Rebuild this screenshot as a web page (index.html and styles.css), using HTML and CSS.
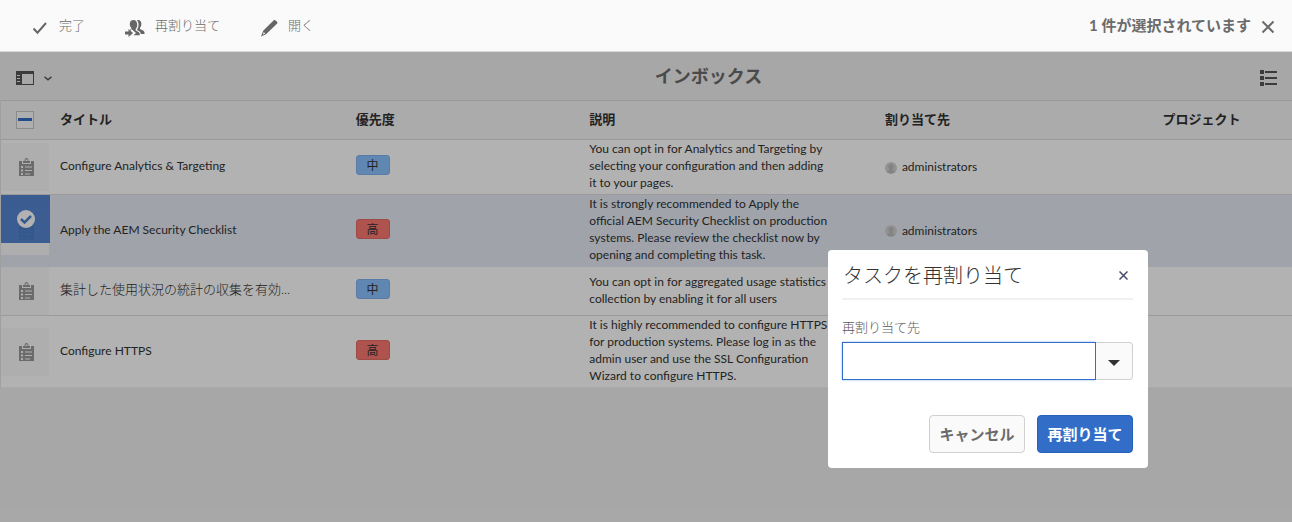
FILE: index.html
```html
<!DOCTYPE html>
<html lang="ja">
<head>
<meta charset="utf-8">
<title>インボックス</title>
<link rel="stylesheet" href="styles.css">
</head>
<body>
<svg class="sprite" aria-hidden="true">
  <symbol id="clipboard" viewBox="0 0 15 18">
    <path fill="currentColor" fill-rule="evenodd" d="M0 3h3v3h9V3h3v15H0zM2 8v2h2V8zm4 .5v1h7v-1zM2 11.500v2h2v-2zm4 .5v1h7v-1zM2 15v2h2v-2zm4 .5v1h5v-1z"/>
    <path fill="currentColor" fill-rule="evenodd" d="M4 5V3h1.500C5.500 1 6.200 0 7.500 0s2 1 2 3H11v2zM6.500 3h2V1.500h-2z"/>
  </symbol>
  <symbol id="avatar" viewBox="0 0 12 12">
    <circle cx="6" cy="6" r="6" fill="#d2d2d2"/>
    <path fill="#bcbcbc" d="M6 2c1.600 0 2.500 1.100 2.500 2.700 0 1-.4 1.900-1 2.400v.8L10 9.500C9 10.700 7.600 11.500 6 11.500S3 10.700 2 9.500l2.500-1.600v-.8c-.6-.5-1-1.400-1-2.400C3.500 3.100 4.400 2 6 2z"/>
  </symbol>
</svg>

<header class="actionbar">
  <div class="actions">
    <button class="action" type="button">
      <svg class="icon" viewBox="0 0 18 18"><path d="M2.500 9.500l4 4.200L15 4" fill="none" stroke="currentColor" stroke-width="2"/></svg>
      <span>完了</span>
    </button>
    <button class="action" type="button">
      <svg class="icon icon-wide" viewBox="0 0 20 18"><path fill="currentColor" d="M8.500 1c-2.300 0-3.700 1.600-3.700 4 0 1.700.6 3 1.500 4v1L3.500 11.500H6V9.800l5 4.200-2.500 2.200h6.300c0-1.800-.4-2.700-1.300-3.200l-2.800-1.500v-1.400c.9-1 1.500-2.400 1.500-4.400C12.200 2.800 10.800 1 8.500 1z"/><path fill="currentColor" d="M12 1.200C14.600.6 16.400 2.200 16.400 4.800c0 1.700-.5 3-1.400 4v1.300l3 1.500c1.200.6 1.600 1.500 1.600 3.400h-3.800c-.2-1.600-.9-2.400-2-3l-1.900-1c1-1.400 1.600-3 1.600-5.200 0-2-.5-3.500-1.500-4.600zM0 12.500h3.500V10l4.500 4-4.500 4v-2.500H0z"/></svg>
      <span>再割り当て</span>
    </button>
    <button class="action" type="button">
      <svg class="icon" viewBox="0 0 18 18"><path fill="currentColor" fill-rule="evenodd" d="M12.500 2.400l1.300-1.200c.5-.4 1-.4 1.500 0l1.900 1.900c.4.500.4 1 0 1.500L6 15.300 1 17.500l2.200-5.800zM3.800 13l-1 2.700 2.300-1.100z"/></svg>
      <span>開く</span>
    </button>
  </div>
  <div class="selection">
    <strong>1 件が選択されています</strong>
    <button class="deselect" type="button" aria-label="選択を解除"><svg viewBox="0 0 14 14"><path d="M1.500 1.500l11 11M12.500 1.500l-11 11" stroke="currentColor" stroke-width="2"/></svg></button>
  </div>
</header>

<main class="content">
  <div class="titlebar">
    <button class="rail" type="button" aria-label="サイドパネル">
      <svg class="rail-icon" viewBox="0 0 18 14"><path fill="currentColor" fill-rule="evenodd" d="M0 0h18v14H0zM6 3v10h11V3zM1 4v1h3V4zm0 3v1h3V7zm0 3v1h3v-1z"/></svg>
      <svg class="chevron" viewBox="0 0 8 5"><path d="M.5.700L4 3.700 7.500.700" fill="none" stroke="currentColor" stroke-width="1.500"/></svg>
    </button>
    <h1>インボックス</h1>
    <button class="viewswitch" type="button" aria-label="リスト表示">
      <svg viewBox="0 0 17 17"><path fill="currentColor" d="M0 0h4v4H0zM0 6h4v4H0zM0 12h4v4H0zM5 1h12v2H5zM5 7h12v2H5zM5 13h12v2H5z"/></svg>
    </button>
  </div>

  <table class="inbox">
    <colgroup><col class="c-thumb"><col class="c-title"><col class="c-priority"><col class="c-desc"><col class="c-assignee"><col></colgroup>
    <thead>
      <tr>
        <th class="check"><input class="select-all" type="checkbox" aria-label="すべて選択"></th>
        <th>タイトル</th><th>優先度</th><th>説明</th><th>割り当て先</th><th>プロジェクト</th>
      </tr>
    </thead>
    <tbody>
      <tr>
        <td class="thumb"><div class="tile"><svg><use href="#clipboard"/></svg></div></td>
        <td>Configure Analytics &amp; Targeting</td>
        <td><span class="badge medium">中</span></td>
        <td class="desc">You can opt in for Analytics and Targeting by selecting your configuration and then adding it to your pages.</td>
        <td><span class="assignee"><svg><use href="#avatar"/></svg>administrators</span></td>
        <td></td>
      </tr>
      <tr class="selected">
        <td class="thumb"><div class="tile"><svg><use href="#clipboard"/></svg></div>
          <div class="mark"><svg viewBox="0 0 18 18"><circle cx="9" cy="9" r="9" fill="#fff"/><path d="M4 9l3.500 3.500L14 6" fill="none" stroke="#4f82cf" stroke-width="2.500"/></svg></div></td>
        <td>Apply the AEM Security Checklist</td>
        <td><span class="badge high">高</span></td>
        <td class="desc">It is strongly recommended to Apply the official AEM Security Checklist on production systems. Please review the checklist now by opening and completing this task.</td>
        <td><span class="assignee"><svg><use href="#avatar"/></svg>administrators</span></td>
        <td></td>
      </tr>
      <tr>
        <td class="thumb"><div class="tile"><svg><use href="#clipboard"/></svg></div></td>
        <td class="ja">集計した使用状況の統計の収集を有効...</td>
        <td><span class="badge medium">中</span></td>
        <td class="desc">You can opt in for aggregated usage statistics collection by enabling it for all users</td>
        <td></td>
        <td></td>
      </tr>
      <tr>
        <td class="thumb"><div class="tile"><svg><use href="#clipboard"/></svg></div></td>
        <td>Configure HTTPS</td>
        <td><span class="badge high">高</span></td>
        <td class="desc">It is highly recommended to configure HTTPS for production systems. Please log in as the admin user and use the SSL Configuration Wizard to configure HTTPS.</td>
        <td></td>
        <td></td>
      </tr>
    </tbody>
  </table>
  <div class="shade"></div>
</main>

<form class="dialog" role="dialog" aria-labelledby="dialog-title">
  <div class="dialog-head">
    <h2 id="dialog-title">タスクを再割り当て</h2>
    <button class="close" type="button" aria-label="閉じる"><svg viewBox="0 0 9 9"><path d="M.5.500l8 8M8.500.500l-8 8" stroke="currentColor" stroke-width="1.500"/></svg></button>
  </div>
  <label for="assignee">再割り当て先</label>
  <div class="combo">
    <input id="assignee" type="text">
    <button type="button" aria-label="候補を表示"><svg viewBox="0 0 12 6"><path fill="currentColor" d="M0 0h12L6 6z"/></svg></button>
  </div>
  <div class="dialog-foot">
    <button class="btn" type="button">キャンセル</button>
    <button class="btn primary" type="submit">再割り当て</button>
  </div>
</form>
</body>
</html>
```

FILE: styles.css
```css
* { box-sizing: border-box; }

body {
  margin: 0;
  min-height: 100vh;
  display: flex;
  flex-direction: column;
  background: #f0f0f0;
  color: #323232;
  font-family: Lato, "Noto Sans CJK JP", sans-serif;
  font-size: 12px;
  line-height: 17px;
}

button, input { font: inherit; color: inherit; }
button { margin: 0; padding: 0; border: 0; background: none; }
svg { display: block; }
.sprite { position: absolute; width: 0; height: 0; }

.actionbar {
  display: flex;
  justify-content: space-between;
  align-items: center;
  height: 52px;
  padding: 0 17px 0 31px;
  background: #fafafa;
  border-bottom: 1px solid #d9d9d9;
  color: #6b6b6b;
}
.actions { display: flex; gap: 40px; }
.action { display: flex; align-items: center; gap: 10px; font-size: 13px; font-weight: 300; }
.icon { width: 18px; height: 18px; margin-top: 4px; color: #666; }
.icon-wide { width: 20px; }
.selection { display: flex; align-items: center; gap: 10px; font-size: 15px; }
.deselect svg { width: 14px; height: 14px; margin-top: 2px; }

.content { position: relative; flex: 1; }
.shade { position: absolute; inset: 0; background: rgba(0, 0, 0, .3); }

.titlebar {
  display: grid;
  grid-template-columns: 1fr auto 1fr;
  align-items: center;
  height: 48px;
  padding: 0 15px 0 16px;
  color: #555;
}
.titlebar h1 { margin: 0; padding-left: 124px; font-size: 18px; line-height: 24px; color: #6b6b6b; }
.rail { display: flex; align-items: center; gap: 10px; justify-self: start; margin-top: 4px; }
.rail-icon { width: 18px; height: 14px; }
.chevron { width: 8px; height: 5px; }
.viewswitch { justify-self: end; margin-top: 4px; }
.viewswitch svg { width: 17px; height: 17px; }

.inbox {
  width: 100%;
  table-layout: fixed;
  border-collapse: separate;
  border-spacing: 0;
  border-left: 1px solid #e4e4e4;
}
.c-thumb { width: 48px; }
.c-title { width: 22.9%; }
.c-priority { width: 18.1%; }
.c-desc { width: 22.9%; }
.c-assignee { width: 21.5%; }
.inbox th {
  height: 40px;
  padding: 0 0 1px 11px;
  border-top: 1px solid #dcdcdc;
  border-bottom: 1px solid #dcdcdc;
  background: #f5f5f5;
  font-size: 13px;
  text-align: left;
}
.inbox th.check { padding-left: 15px; }
.select-all {
  appearance: none;
  display: block;
  width: 18px;
  height: 18px;
  margin: 0;
  border: 1px solid #c8c8c8;
  background: linear-gradient(#326ec8, #326ec8) center / 14px 3px no-repeat #fafafa;
}
.inbox td {
  padding: 0 0 3px 11px;
  border-bottom: 1px solid #dedede;
  background: #fff;
  vertical-align: middle;
}
.inbox tbody tr:last-child td { border-bottom-color: #f4f4f4; }
.inbox .selected td { background: #e5eaf4; border-bottom-color: #e5eaf4; }
.inbox td.thumb { position: relative; padding: 0; }
.inbox td.desc { padding-right: 46px; }
.inbox td.ja { font-size: 13px; font-weight: 300; }
.tile { display: grid; place-items: center; height: 48px; padding-left: 2px; background: #fafafa; color: #9a9a9a; }
.tile svg { width: 15px; height: 18px; }
.mark {
  position: absolute;
  inset: 0 -1px auto 0;
  display: grid;
  place-items: center;
  height: 48px;
  background: rgba(70, 124, 204, .92);
}
.mark svg { width: 18px; height: 18px; }

.badge {
  display: block;
  width: 34px;
  height: 20px;
  margin-bottom: 1px;
  border: 1px solid;
  border-radius: 3px;
  line-height: 19px;
  text-align: center;
}
.medium { background: #8ac2ff; border-color: #7fb2ee; }
.high { background: #fb7770; border-color: #e66a64; }
.assignee { display: flex; align-items: center; gap: 5px; padding-top: 2px; }
.assignee svg { width: 12px; height: 12px; margin-top: 2px; }

/* Dialog floats over the inbox */
.dialog {
  position: absolute;
  top: 250px;
  right: 144px;
  width: 320px;
  padding: 10px 15px 15px 14px;
  border-radius: 4px;
  background: #fff;
}
.dialog-head {
  display: flex;
  justify-content: space-between;
  align-items: center;
  height: 40px;
  padding: 0 5px 8px 1px;
  border-bottom: 2px solid #f0f0f0;
}
.dialog h2 { margin: 0; font-size: 20px; line-height: 30px; font-weight: 200; }
.close svg { width: 9px; height: 9px; color: #4b4b6b; }
.dialog label { display: block; margin: 19px 0 6px; font-size: 13px; font-weight: 300; color: #5a5a5a; }
.combo { display: flex; height: 38px; }
.combo input {
  flex: 1;
  min-width: 0;
  padding: 0 10px;
  border: 1px solid #326ec8;
  border-radius: 0;
  background: #fff;
  box-shadow: 0 0 2px #8fb2e6;
  outline: 0;
}
.combo button {
  display: grid;
  place-items: center;
  width: 37px;
  padding-top: 4px;
  border: 1px solid #d0d0d0;
  border-left: 0;
  border-radius: 0 4px 4px 0;
  background: #fafafa;
}
.combo svg { width: 12px; height: 6px; }
.dialog-foot { display: flex; justify-content: flex-end; gap: 12px; margin-top: 35px; }
.btn {
  min-width: 96px;
  height: 38px;
  padding: 0 9px;
  border: 1px solid #d0d0d0;
  border-radius: 4px;
  background: #fafafa;
  color: #6b6b6b;
  font-size: 15px;
  font-weight: 700;
}
.btn.primary { background: #326ec8; border-color: #2562b9; color: #fff; }
```
